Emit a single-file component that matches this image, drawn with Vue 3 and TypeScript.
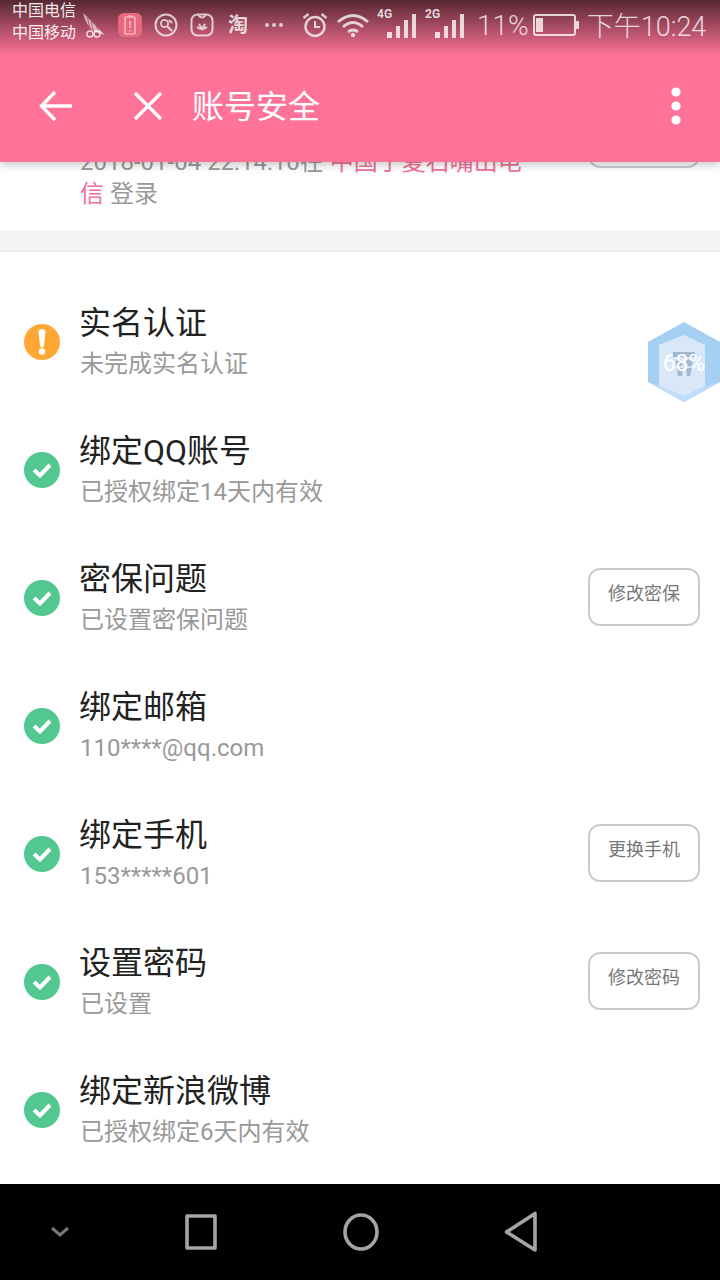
<template>
  <div class="screen">
    <header class="appbar">
      <div class="status">
        <div class="carriers">
          <span>中国电信</span>
          <span>中国移动</span>
        </div>
        <svg class="st st-nosim" width="24" height="26" viewBox="0 0 24 26">
          <path d="M1 1 L23 23 L13 20 Q4 14 1 1Z" fill="#fff" opacity=".62" />
          <path d="M5 4l3 12M9 8l2 10M14 14l3 6" stroke="#b85a76" stroke-width="1" />
          <circle cx="8" cy="22" r="3" fill="none" stroke="#fff" stroke-width="1.5" opacity=".8" />
          <circle cx="15" cy="22" r="3" fill="none" stroke="#fff" stroke-width="1.5" opacity=".8" />
        </svg>
        <div class="st-red">
          <svg width="12" height="20" viewBox="0 0 12 20">
            <rect x="1" y="2" width="10" height="17" rx="1" fill="none" stroke="#ffd0d8" stroke-width="1.2" />
            <path d="M6 6v7M6 15v1.5M4 1h4" stroke="#ffd0d8" stroke-width="1.2" />
          </svg>
        </div>
        <svg class="st" width="24" height="24" viewBox="0 0 24 24" fill="none" stroke="#fff" opacity=".72">
          <circle cx="12" cy="12" r="10.5" stroke-width="2" />
          <circle cx="10.5" cy="10.5" r="3.6" stroke-width="1.8" />
          <path d="M13 13l5 5M15 7l3 3" stroke-width="2" />
        </svg>
        <svg class="st" width="24" height="24" viewBox="0 0 24 24" fill="none" stroke="#fff" opacity=".72">
          <rect x="1.5" y="1.5" width="21" height="21" rx="6" stroke-width="2" />
          <path d="M8 2q4 5 8 0" stroke-width="2" />
          <path d="M7 14q5 4 10 0M9 11l3 5 3-5" stroke-width="2" />
        </svg>
        <span class="st-tao">淘</span>
        <svg class="st-more" width="20" height="6" viewBox="0 0 20 6" fill="#fff" opacity=".7">
          <circle cx="3" cy="3" r="2" />
          <circle cx="10" cy="3" r="2" />
          <circle cx="17" cy="3" r="2" />
        </svg>
        <svg class="st-alarm" width="26" height="26" viewBox="0 0 26 26" fill="none" stroke="#fff" opacity=".75">
          <circle cx="13" cy="14.5" r="9.5" stroke-width="2.4" />
          <path d="M13 9v6h5" stroke-width="2" />
          <path d="M1.5 6l5-4M24.5 6l-5-4" stroke-width="2.4" />
        </svg>
        <svg class="st-wifi" width="34" height="26" viewBox="0 0 34 26" fill="none" stroke="#fff" opacity=".75">
          <path d="M2 10q15-13 30 0M7 15q10-9 20 0M12 20q5-4 10 0" stroke-width="2.8" />
          <circle cx="17" cy="23" r="2.2" fill="#fff" stroke="none" />
        </svg>
        <svg class="st-signal" width="40" height="30" viewBox="0 0 40 30">
          <text x="0" y="10" class="net">4G</text>
          <g fill="#fff" opacity=".78">
            <rect x="10" y="24" width="5" height="6" />
            <rect x="19" y="18" width="4" height="12" />
            <rect x="27" y="12" width="4" height="18" />
            <rect x="35" y="6" width="4" height="24" />
          </g>
        </svg>
        <svg class="st-signal second" width="40" height="30" viewBox="0 0 40 30">
          <text x="0" y="10" class="net">2G</text>
          <g fill="#fff" opacity=".78">
            <rect x="10" y="24" width="5" height="6" />
            <rect x="19" y="18" width="4" height="12" />
            <rect x="27" y="12" width="4" height="18" />
            <rect x="35" y="6" width="4" height="24" />
          </g>
        </svg>
        <span class="st-percent">11%</span>
        <svg class="st-battery" width="46" height="22" viewBox="0 0 46 22" fill="none" opacity=".78">
          <rect x="1" y="1" width="41" height="20" rx="2" stroke="#fff" stroke-width="2" />
          <rect x="3" y="4" width="7" height="14" fill="#fff" />
          <rect x="43" y="7" width="3" height="8" fill="#fff" />
        </svg>
        <span class="st-time">下午10:24</span>
      </div>
      <div class="toolbar">
        <svg class="tb-back" width="34" height="32" viewBox="0 0 34 32" fill="none" stroke="#fff" stroke-width="3.4">
          <path d="M33 16H3M16 2L2.5 16 16 30" />
        </svg>
        <svg class="tb-close" width="30" height="30" viewBox="0 0 30 30" fill="none" stroke="#fff" stroke-width="3.2">
          <path d="M2 2l26 26M28 2L2 28" />
        </svg>
        <span class="tb-title">账号安全</span>
        <svg class="tb-menu" width="10" height="38" viewBox="0 0 10 38" fill="#fff">
          <circle cx="5" cy="5" r="4.6" />
          <circle cx="5" cy="19" r="4.6" />
          <circle cx="5" cy="33" r="4.6" />
        </svg>
      </div>
    </header>

    <main class="content">
      <div class="scroller">
        <section class="login-card">
          <p class="login-text">
            2018-01-04 22:14:10在 <em>中国宁夏石嘴山电信</em> 登录
          </p>
          <button class="action" type="button"></button>
        </section>
        <div class="divider"></div>
        <ul class="list">
          <li v-for="item in items" :key="item.title" class="row">
            <span class="badge" :class="item.done ? 'ok' : 'warn'">
              <svg v-if="item.done" width="22" height="18" viewBox="0 0 22 18" fill="none" stroke="#fff" stroke-width="4">
                <path d="M3 9l6 5.5L19 4" />
              </svg>
              <svg v-else width="8" height="26" viewBox="0 0 8 26" fill="#fff">
                <path d="M0.5 3a3.5 3 0 0 1 7 0L6 16.5a2 2 0 0 1-4 0Z" />
                <circle cx="4" cy="22.5" r="3.2" />
              </svg>
            </span>
            <div class="texts">
              <div class="title">{{ item.title }}</div>
              <div class="sub">{{ item.sub }}</div>
            </div>
            <button v-if="item.action" class="action" type="button">{{ item.action }}</button>
          </li>
        </ul>
      </div>
      <div class="float-ball">
        <svg width="72" height="80" viewBox="0 0 72 80">
          <polygon points="36,0 72,20 72,60 36,80 0,60 0,20" fill="#a6cff4" />
          <polygon points="36,74 57,64 72,60 36,80 0,60 11,64" fill="#bfdcf8" />
          <polygon points="36,13 57,23 57,64 36,74 11,64 11,23" fill="#d8e8f8" />
          <g fill="#a3b9d2">
            <rect x="25" y="30" width="22" height="5" />
            <circle cx="31" cy="41" r="3.5" />
            <circle cx="41" cy="41" r="3.5" />
            <path d="M29 46h6l-1 8h-4ZM38 46h6l-2 8h-3Z" />
          </g>
          <text x="36" y="49" class="ball-text">68%</text>
        </svg>
      </div>
    </main>

    <nav class="navbar">
      <svg class="nav-down" width="20" height="12" viewBox="0 0 20 12" fill="none" stroke="#777" stroke-width="3">
        <path d="M2 2l8 7 8-7" />
      </svg>
      <svg class="nav-square" width="32" height="36" viewBox="0 0 32 36" fill="none" stroke="#a5a5a5" stroke-width="3.6" stroke-linejoin="round">
        <rect x="2" y="2" width="28" height="32" />
      </svg>
      <svg class="nav-circle" width="36" height="38" viewBox="0 0 36 38" fill="none" stroke="#a5a5a5" stroke-width="3.6">
        <ellipse cx="18" cy="19" rx="16" ry="17" />
      </svg>
      <svg class="nav-back" width="34" height="42" viewBox="0 0 34 42" fill="none" stroke="#a5a5a5" stroke-width="3.6" stroke-linejoin="round">
        <path d="M31 2.5V39L2.5 21Z" />
      </svg>
    </nav>
  </div>
</template>

<script setup lang="ts">
interface SecurityItem {
  title: string;
  sub: string;
  done: boolean;
  action?: string;
}

const items: SecurityItem[] = [
  { title: '实名认证', sub: '未完成实名认证', done: false },
  { title: '绑定QQ账号', sub: '已授权绑定14天内有效', done: true },
  { title: '密保问题', sub: '已设置密保问题', done: true, action: '修改密保' },
  { title: '绑定邮箱', sub: '110****@qq.com', done: true },
  { title: '绑定手机', sub: '153*****601', done: true, action: '更换手机' },
  { title: '设置密码', sub: '已设置', done: true, action: '修改密码' },
  { title: '绑定新浪微博', sub: '已授权绑定6天内有效', done: true },
];
</script>

<style>
html,
body {
  margin: 0;
  background: #fff;
}
</style>

<style scoped>
.screen {
  width: 720px;
  height: 1280px;
  display: flex;
  flex-direction: column;
  overflow: hidden;
  font-family: Roboto, "Noto Sans CJK SC", sans-serif;
  background: #fff;
}

/* app bar */
.appbar {
  height: 162px;
  flex: none;
  position: relative;
  z-index: 2;
  background: linear-gradient(rgba(0, 0, 0, 0.66), rgba(0, 0, 0, 0) 56px), #fe7397;
  box-shadow: 0 3px 8px rgba(0, 0, 0, 0.22);
}

.status {
  height: 50px;
  display: flex;
  align-items: center;
  padding-left: 12px;
  color: #fff;
}

.carriers {
  width: 64px;
  display: flex;
  flex-direction: column;
  font-size: 16px;
  line-height: 22px;
  margin-top: -6px;
  color: rgba(255, 255, 255, 0.92);
}

.st {
  flex: none;
  margin-left: 12px;
}

.st-nosim {
  margin-left: 6px;
}

.st-red {
  width: 24px;
  height: 24px;
  margin-left: 12px;
  border-radius: 6px;
  background: #e8687e;
  display: flex;
  align-items: center;
  justify-content: center;
}

.st-tao {
  margin-left: 14px;
  width: 20px;
  font-size: 20px;
  font-weight: 700;
  line-height: 24px;
  color: rgba(255, 255, 255, 0.78);
}

.st-more {
  margin-left: 16px;
}

.st-alarm {
  margin-left: 18px;
}

.st-wifi {
  margin-left: 8px;
}

.st-signal {
  margin-left: 7px;
  margin-top: -4px;
}

.st-signal.second {
  margin-left: 8px;
}

.net {
  font-size: 12px;
  font-weight: 700;
  fill: rgba(255, 255, 255, 0.8);
}

.st-percent {
  margin-left: 12px;
  font-size: 28px;
  font-weight: 300;
  color: rgba(255, 255, 255, 0.78);
}

.st-battery {
  margin-left: 4px;
}

.st-time {
  margin-left: 8px;
  margin-top: -2px;
  font-size: 27px;
  font-weight: 300;
  color: rgba(255, 255, 255, 0.78);
  white-space: nowrap;
}

.toolbar {
  height: 112px;
  display: flex;
  align-items: center;
  padding-left: 39px;
  padding-right: 39px;
}

.tb-close {
  margin-left: 60px;
}

.tb-title {
  margin-left: 29px;
  margin-top: -4px;
  font-size: 32px;
  font-weight: 400;
  color: #fff;
}

.tb-menu {
  margin-left: auto;
}

/* page body */
.content {
  flex: 1;
  position: relative;
  overflow: hidden;
}

.scroller {
  margin-top: -60px;
}

.login-card {
  height: 128px;
  box-sizing: border-box;
  padding: 10px 20px 0 80px;
  display: flex;
  justify-content: space-between;
  align-items: flex-start;
}

.login-text {
  margin: 34px 0 0;
  width: 450px;
  font-size: 24px;
  line-height: 32px;
  color: #999;
}

.login-text em {
  font-style: normal;
  color: #f0709a;
}

.divider {
  height: 20px;
  background: #f5f5f5;
  border-bottom: 2px solid #efefef;
}

.list {
  list-style: none;
  margin: 0;
  padding: 26px 0 0;
}

.row {
  height: 128px;
  display: flex;
  align-items: center;
  padding: 0 20px 0 24px;
}

.badge {
  width: 36px;
  height: 36px;
  flex: none;
  border-radius: 50%;
  display: flex;
  align-items: center;
  justify-content: center;
}

.badge.ok {
  background: #52c78f;
}

.badge.warn {
  background: #ffa733;
}

.texts {
  flex: 1;
  margin-left: 20px;
}

.title {
  margin-left: -1px;
  font-size: 32px;
  line-height: 41px;
  color: #222;
}

.sub {
  margin-top: 3px;
  font-size: 24px;
  line-height: 34px;
  color: #999;
}

.action {
  width: 112px;
  height: 58px;
  flex: none;
  margin-top: -2px;
  box-sizing: border-box;
  border: 2px solid #ccc;
  border-radius: 12px;
  background: #fff;
  padding: 0 0 10px;
  font-family: inherit;
  font-size: 18px;
  color: #777;
}

.float-ball {
  position: absolute;
  right: 0;
  top: 160px;
  height: 80px;
}

.ball-text {
  font-size: 23px;
  fill: #fff;
  text-anchor: middle;
}

/* system nav */
.navbar {
  height: 96px;
  flex: none;
  background: #000;
  display: flex;
  align-items: center;
}

.nav-down {
  margin-left: 50px;
}

.nav-square {
  margin-left: 115px;
}

.nav-circle {
  margin-left: 126px;
}

.nav-back {
  margin-left: 125px;
}
</style>
